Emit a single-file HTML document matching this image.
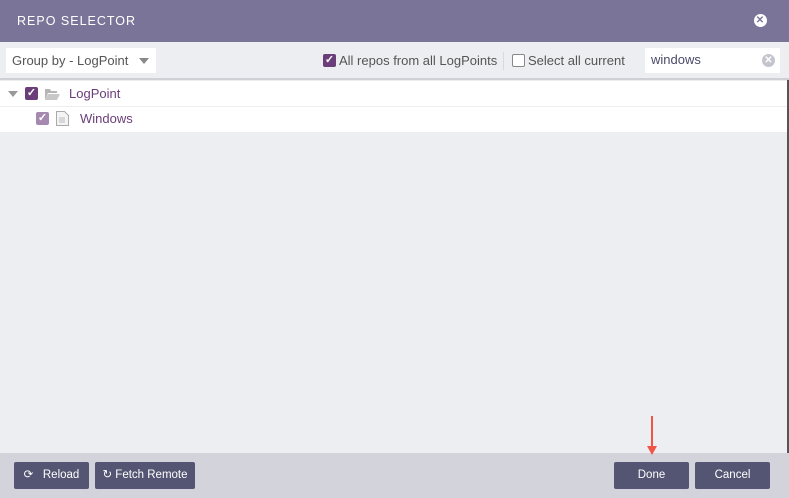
<!DOCTYPE html>
<html><head><meta charset="utf-8"><style>
*{box-sizing:border-box;margin:0;padding:0}
body{width:789px;height:498px;overflow:hidden;font-family:"Liberation Sans",sans-serif;background:#edeef1;position:relative}
.hdr{position:absolute;left:0;top:0;width:789px;height:42px;background:#7a7598;color:#fff;font-size:12.5px;letter-spacing:1px;padding:14px 0 0 17px}
.x{position:absolute;width:13px;height:13px;border-radius:50%;color:#7a7598;font-size:10px;line-height:13px;text-align:center;font-weight:bold}
.tb{position:absolute;left:0;top:42px;width:789px;height:38px;background:#edeef1;border-bottom:2px solid #cfd0d6}
.sel{position:absolute;left:6px;top:6px;width:150px;height:25px;background:#fff;color:#555;font-size:13px;padding:5px 0 0 6px}
.tri{position:absolute;width:0;height:0;border-left:5px solid transparent;border-right:5px solid transparent;border-top:6px solid #888}
.cb{position:absolute;width:13px;height:13px;border-radius:2px;background:#6b3e7a;color:#fff;font-size:11px;line-height:13px;text-align:center;font-weight:bold}
.lbl{position:absolute;font-size:13px;color:#555}
.row{position:absolute;left:0;width:787px;height:26px;background:#fff;border-bottom:1px solid #edeef1}
.ft{position:absolute;left:0;top:453px;width:789px;height:45px;background:#d3d3dc}
.btn{position:absolute;top:9px;height:27px;background:#535572;color:#fff;font-size:11.5px;text-align:center;line-height:27px;border-radius:2px}
</style></head><body>
<div class="hdr">REPO SELECTOR<div class="x" style="left:754px;top:14px;background:#fff">✕</div></div>
<div class="tb">
 <div class="sel">Group by - LogPoint<div class="tri" style="left:133px;top:10px"></div></div>
 <div class="cb" style="left:323px;top:12px">✓</div>
 <div class="lbl" style="left:339px;top:11px">All repos from all LogPoints</div>
 <div style="position:absolute;left:503px;top:10px;width:1px;height:18px;background:#d8d8de"></div>
 <div style="position:absolute;left:512px;top:12px;width:13px;height:13px;border:1px solid #888;background:#fff;border-radius:2px"></div>
 <div class="lbl" style="left:528px;top:11px">Select all current</div>
 <div style="position:absolute;left:645px;top:6px;width:135px;height:25px;background:#fff"></div>
 <div class="lbl" style="left:651px;top:10px;color:#4a4a6a">windows</div>
 <div class="x" style="left:762px;top:12px;background:#c4c4ce;color:#fff">✕</div>
</div>
<div class="row" style="top:81px">
 <div class="tri" style="left:8px;top:10px;border-top-color:#999"></div>
 <div class="cb" style="left:25px;top:6px">✓</div>
 <svg style="position:absolute;left:45px;top:7px" width="15" height="12"><path d="M0 1h5l1 2h6v2H3L0 12z" fill="#b5b5b5"/><path d="M3 6h12l-3 6H0z" fill="#c8c8c8"/></svg>
 <div class="lbl" style="left:69px;top:5px;color:#6b3e7a">LogPoint</div>
</div>
<div class="row" style="top:107px">
 <div class="cb" style="left:36px;top:5px;background:#a589b0">✓</div>
 <svg style="position:absolute;left:56px;top:4px" width="13" height="15"><path d="M.5.5h8l4 4v10H.5z" fill="#f4f4f4" stroke="#aaa"/><path d="M3 7h6M3 9h6M3 11h6" stroke="#bbb"/></svg>
 <div class="lbl" style="left:80px;top:4px;color:#6b3e7a">Windows</div>
</div>
<div style="position:absolute;left:787px;top:80px;width:2px;height:373px;background:#555"></div>
<div class="ft">
 <div class="btn" style="left:14px;width:75px">⟳&nbsp;&nbsp; Reload</div>
 <div class="btn" style="left:95px;width:100px">↻ Fetch Remote</div>
 <div class="btn" style="left:614px;width:75px">Done</div>
 <div class="btn" style="left:695px;width:75px">Cancel</div>
</div>
<div style="position:absolute;left:651px;top:416px;width:2px;height:32px;background:#f05545"></div>
<div style="position:absolute;left:647px;top:446px;width:0;height:0;border-left:5px solid transparent;border-right:5px solid transparent;border-top:9px solid #f05545"></div>
</body></html>
